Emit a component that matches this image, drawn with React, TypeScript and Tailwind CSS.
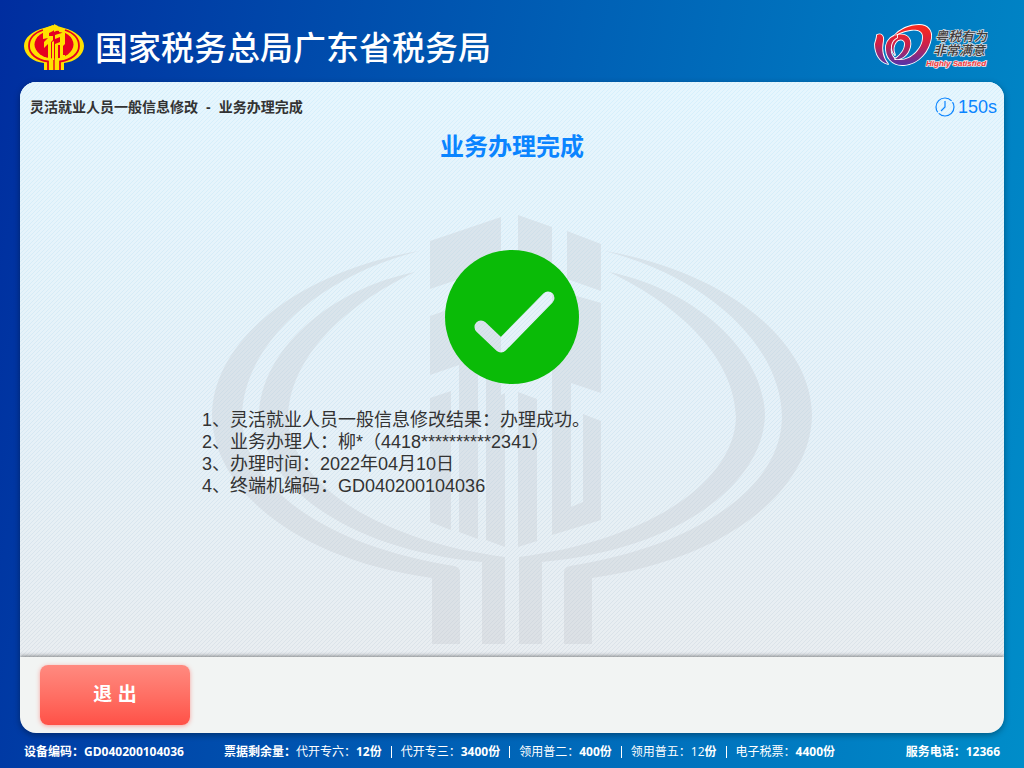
import type { ReactNode } from "react";

const results = [
  "灵活就业人员一般信息修改结果：办理成功。",
  "业务办理人：柳*（4418**********2341）",
  "办理时间：2022年04月10日",
  "终端机编码：GD040200104036",
];

const invoices = [
  { label: "代开专六：", count: "12", bold: true },
  { label: "代开专三：", count: "3400", bold: true },
  { label: "领用普二：", count: "400", bold: true },
  { label: "领用普五：", count: "12", bold: false },
  { label: "电子税票：", count: "4400", bold: true },
];

// Half of the two rings with their legs, mirrored around the emblem's axis
const RING_OUTER =
  "M208 36C90 56 2 124 1 200C2 274 84 344 221 363V429H249V358C249 354 247 352 243 351C122 332 32 276 31 202C32 130 106 62 208 36Z";
const RING_INNER =
  "M204 57C120 74 50 134 48 200C50 268 132 334 271 347V429H294V342C170 326 79 270 77 202C79 144 130 92 204 57Z";
const GLYPH =
  "M219 26L290 2V50L219 74ZM219 101L290 77V180L294 178V332L275 325V146L267 149V324L248 317V150L219 160ZM219 183L240 176V315L219 307Z" +
  "M307 0L341 12V60L307 48ZM356 16L390 29V76L356 64ZM341 74L390 88V178L360 168V292L372 287V199L390 206V305L341 320ZM307 177L326 184V326L307 332Z";

const RIBBON_LEFT = "M3 11C7 9 10 12 9 17C7 27 9 34 14 40C6 38 1 30 1 20C2 16 3 14 3 11Z";
const RIBBON_RIGHT =
  "M19 13C26 5 36 1 45 1C54 1 58 7 57 14C55 27 45 40 30 41C18 42 11 33 12 22C13 16 18 11 25 11L27 14C20 14 16 21 17 28C18 33 21 36 26 36C38 36 49 24 49 13C49 6 42 5 36 6C29 7 24 9 19 13Z";
const RIBBON_LOOP = "M24 11C33 9 38 15 36 23C34 31 28 36 21 35C27 31 31 25 31 20C31 15 25 14 22 18C19 22 19 27 21 31C16 26 17 17 24 14Z";

function TaxEmblem({ className }: { className?: string }) {
  return (
    <svg viewBox="0 0 602 430" className={className} fill="currentColor" aria-hidden="true">
      <path d={RING_OUTER} />
      <path d={RING_INNER} />
      <g transform="translate(602 0) scale(-1 1)">
        <path d={RING_OUTER} />
        <path d={RING_INNER} />
      </g>
      <path d={GLYPH} />
    </svg>
  );
}

function TaxLogo() {
  return (
    <svg viewBox="0 0 60 46" className="h-[46px] w-15" role="img" aria-label="中国税务">
      <path d="M20 4C8 7 0 14 0 22C0 31 9 38 20 39V46H40V39C51 38 60 31 60 22C60 14 52 7 40 4L30 1Z" fill="#ffe100" />
      <path d="M19 6C10 9 5 15 5 22C5 30 13 36 24 37.500V46M41 6C50 9 55 15 55 22C55 30 47 36 36 37.500V46" fill="none" stroke="#e60020" strokeWidth="1.800" />
      <ellipse cx="30" cy="20.500" rx="19.500" ry="14" fill="#e60020" />
      <path d="M30 34V46" stroke="#e60020" strokeWidth="1.400" />
      <path
        d="M19 5L29 1V7L25 9V12H29V16L27 18V36L24 35V20L20 24V18L24 14L19 15ZM28 18L30 17V36H28ZM30 0L34 2V6L30 8ZM35 3L40 5V9L35 8ZM31 11L41 8V20L39 22V31H41V33L36 35V21H34V36L31 35V20L36 18V13L31 15Z"
        fill="#ffe100"
      />
    </svg>
  );
}

function SatisfiedLogo() {
  return (
    <svg viewBox="0 0 114 46" className="h-[46px] w-[114px]" role="img" aria-label="粤税有为 非常满意">
      <defs>
        <linearGradient id="ribbon" gradientUnits="userSpaceOnUse" x1="30" y1="2" x2="30" y2="42">
          <stop offset="0" stopColor="#fa2a1c" />
          <stop offset="0.45" stopColor="#cf2048" />
          <stop offset="1" stopColor="#4b35b0" />
        </linearGradient>
      </defs>
      <g fill="url(#ribbon)" stroke="#fff" strokeWidth="1.800" strokeLinejoin="round" paintOrder="stroke">
        <path d={RIBBON_LEFT} />
        <path d={RIBBON_RIGHT} />
        <path d={RIBBON_LOOP} />
      </g>
      <g
        fontFamily='"Noto Sans CJK SC", sans-serif'
        fontSize="13"
        fontStyle="italic"
        fontWeight="500"
        fill="#3f3b3a"
        stroke="#d8dde2"
        strokeWidth="1.500"
        paintOrder="stroke"
      >
        <text x="61" y="17">粤税有为</text>
        <text x="59" y="31">非常满意</text>
      </g>
      <text
        x="52"
        y="42"
        fontFamily='"Liberation Sans", sans-serif'
        fontSize="8"
        fontStyle="italic"
        fontWeight="700"
        fill="#f0383c"
        stroke="#f3e6ea"
        strokeWidth="1.500"
        paintOrder="stroke"
      >
        Highly Satisfied
      </text>
    </svg>
  );
}

function SuccessIcon() {
  return (
    <svg viewBox="0 0 134 134" className="size-[134px]" role="img" aria-label="成功">
      <defs>
        <mask id="tick">
          <rect width="134" height="134" fill="#fff" />
          <path d="M36 77L56 96L103 48" fill="none" stroke="#000" strokeWidth="13" strokeLinecap="round" strokeLinejoin="round" />
        </mask>
      </defs>
      <circle cx="67" cy="67" r="67" fill="#0abb07" mask="url(#tick)" />
    </svg>
  );
}

function ClockIcon() {
  return (
    <svg viewBox="0 0 20 20" className="size-5" fill="none" stroke="currentColor" aria-hidden="true">
      <circle cx="10" cy="10" r="9" strokeWidth="1.200" strokeDasharray="21 1.5 27 1.5" />
      <path d="M10 4V10L6 14" strokeWidth="1.200" />
    </svg>
  );
}

function StatusItem({ label, children }: { label: string; children: ReactNode }) {
  return (
    <p className="font-bold">
      {label}
      {children}
    </p>
  );
}

export default function App() {
  return (
    <div className="flex min-h-screen flex-col bg-linear-100 from-[#002d9f] to-[#008dc9] px-5 font-['Liberation_Sans','Noto_Sans_CJK_SC',sans-serif] text-[#333]">
      <header className="flex h-[82px] shrink-0 items-center justify-between pr-4 pl-1">
        <div className="flex items-center gap-[11px] pt-3">
          <TaxLogo />
          <h1 className="pt-1 text-[33px] leading-10 font-medium text-white">国家税务总局广东省税务局</h1>
        </div>
        <div className="pt-3">
          <SatisfiedLogo />
        </div>
      </header>

      <main className="flex grow flex-col overflow-hidden rounded-2xl shadow-[0_2px_6px_rgba(0,0,0,0.35)]">
        <section className="relative isolate flex grow flex-col bg-[#e1f3fc] bg-[linear-gradient(135deg,transparent_12%,rgba(255,255,255,0.38)_12%,rgba(255,255,255,0.38)_38%,transparent_38%,transparent_62%,rgba(255,255,255,0.38)_62%,rgba(255,255,255,0.38)_88%,transparent_88%),linear-gradient(#d6f0fc,#d6e8f3_60%,#dbe2e8)] bg-[length:4px_4px,100%_100%]">
          <div className="absolute inset-x-0 bottom-3 -z-10 flex justify-center">
            <TaxEmblem className="w-[602px] text-[#c0c4cb]/30" />
          </div>

          <div className="flex items-center justify-between pt-[13px] pr-[7px] pl-[10px]">
            <nav aria-label="位置" className="flex gap-2 text-sm font-bold">
              <span>灵活就业人员一般信息修改</span>
              <span>-</span>
              <span>业务办理完成</span>
            </nav>
            <p className="flex items-center gap-[3px] text-lg leading-6 text-[#0a84ff]">
              <ClockIcon />
              150s
            </p>
          </div>

          <h2 className="pt-3 text-center text-2xl font-bold text-[#0a84ff]">业务办理完成</h2>

          <div className="flex justify-center pt-[87px]">
            <SuccessIcon />
          </div>

          <ol className="mx-auto w-[620px] pt-[25px] text-lg leading-[22px]">
            {results.map((text, i) => (
              <li key={text}>
                {i + 1}、{text}
              </li>
            ))}
          </ol>
        </section>

        <div className="z-10 bg-[#f2f4f3] px-5 py-2 shadow-[0_-1px_4px_rgba(0,0,0,0.45)]">
          <button
            type="button"
            className="h-15 w-[150px] rounded-lg bg-linear-to-b from-[#ff8a80] to-[#ff5047] text-[19px] font-bold text-white shadow-[0_1px_4px_rgba(255,80,71,0.5)]"
          >
            退 出
          </button>
        </div>
      </main>

      <footer className="flex h-[35px] shrink-0 items-center justify-between px-1 pt-[2px] font-['Open_Sans','Noto_Sans_CJK_SC',sans-serif] text-xs text-white">
        <div className="flex gap-10">
          <StatusItem label="设备编码：">GD040200104036</StatusItem>
          <div className="flex">
            <p className="font-bold">票据剩余量：</p>
            <ul className="flex divide-x divide-white leading-3">
              {invoices.map(({ label, count, bold }) => (
                <li key={label} className="self-center px-[9px] first:pl-0">
                  {label}
                  <span className={bold ? "font-bold" : ""}>{count}</span>
                  <span className="font-bold">份</span>
                </li>
              ))}
            </ul>
          </div>
        </div>
        <StatusItem label="服务电话：">12366</StatusItem>
      </footer>
    </div>
  );
}
